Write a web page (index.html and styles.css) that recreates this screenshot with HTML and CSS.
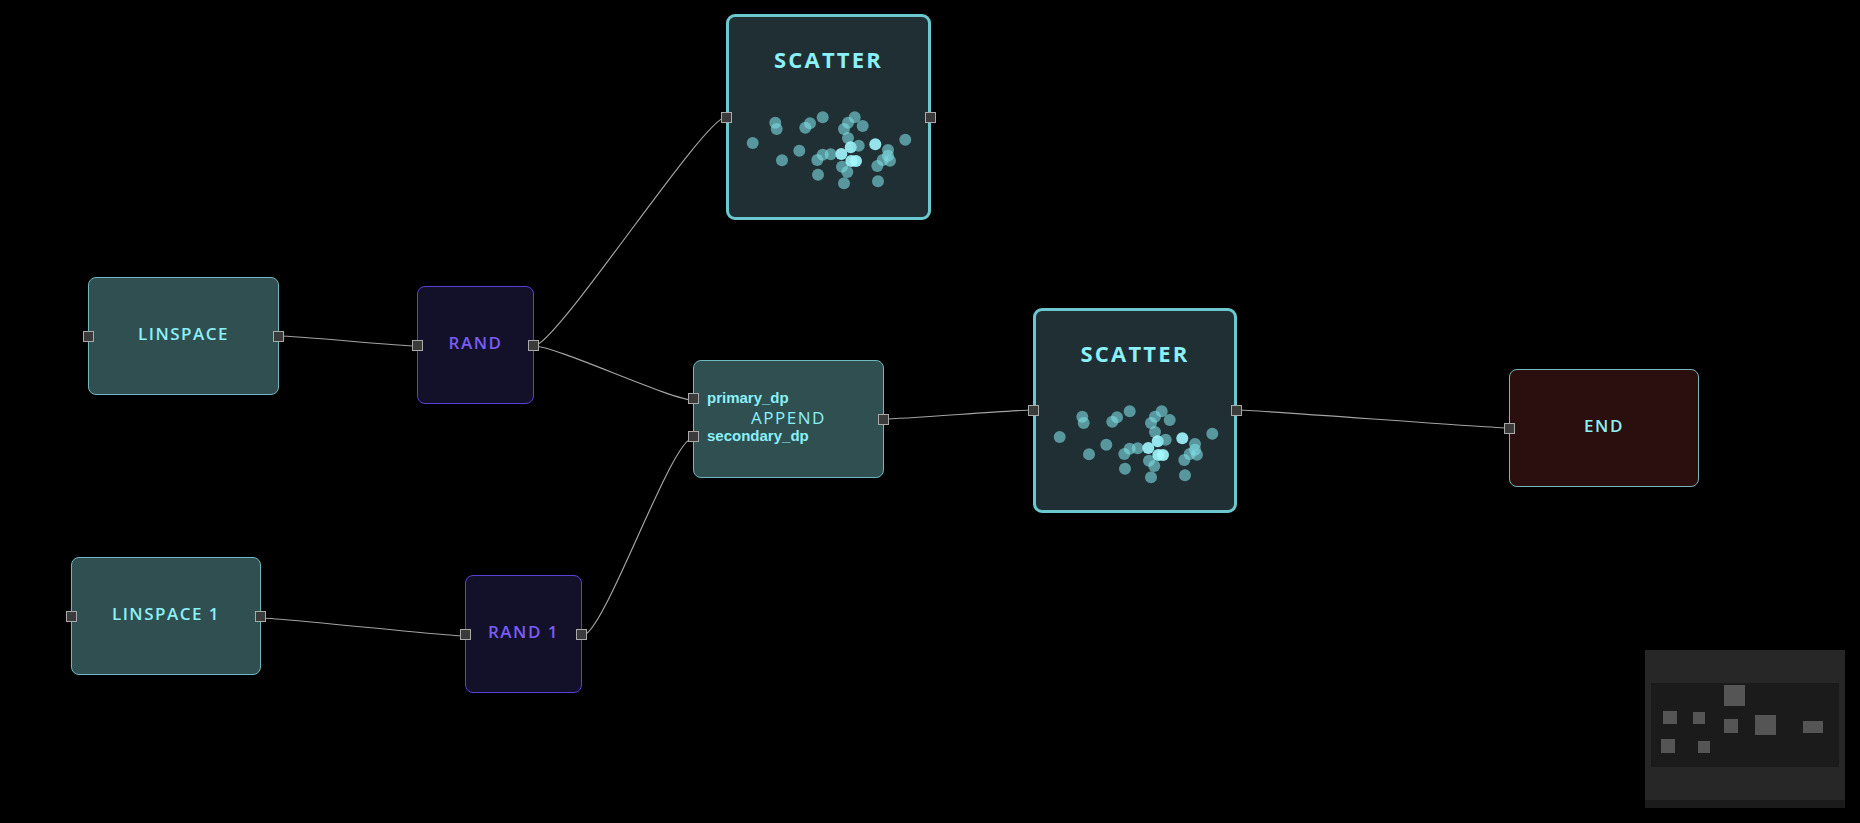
FILE: index.html
```html
<!DOCTYPE html>
<html lang="en">
<head>
  <meta charset="UTF-8" />
  <title>Flow Editor</title>
  <link rel="stylesheet" href="styles.css">
</head>
<body>
  <div class="canvas">
    <svg class="edges" width="1860" height="823" viewBox="0 0 1860 823">
      <path d="M 279 336 C 300 336, 396 346, 417 346" />
      <path d="M 534 346 C 556 346, 704 117, 726 117" />
      <path d="M 534 346 C 556 346, 671 400, 693 400" />
      <path d="M 261 618 C 282 618, 444 636, 465 636" />
      <path d="M 582 636 C 604 636, 671 438, 693 438" />
      <path d="M 884 419 C 905 419, 1012 410, 1033 410" />
      <path d="M 1237 410 C 1258 410, 1488 428, 1509 428" />
    </svg>

    <div class="node teal n-linspace">
      <span class="port in"></span>
      <span class="title">LINSPACE</span>
      <span class="port out"></span>
    </div>

    <div class="node purple n-rand">
      <span class="port in"></span>
      <span class="title">RAND</span>
      <span class="port out"></span>
    </div>

    <div class="node teal n-linspace1">
      <span class="port in"></span>
      <span class="title">LINSPACE 1</span>
      <span class="port out"></span>
    </div>

    <div class="node purple n-rand1">
      <span class="port in"></span>
      <span class="title">RAND 1</span>
      <span class="port out"></span>
    </div>

    <div class="node teal n-append">
      <div class="port-row primary"><span class="port"></span><span class="port-label">primary_dp</span></div>
      <div class="port-row secondary"><span class="port"></span><span class="port-label">secondary_dp</span></div>
      <span class="title light">APPEND</span>
      <span class="port out"></span>
    </div>

    <div class="node scatter n-scatter-a">
      <span class="port in"></span>
      <div class="scatter-title">SCATTER</div>
      <svg class="plot" width="199" height="140" viewBox="3 62 199 140">
        <g class="dots">
          <circle cx="26.7" cy="129" r="6" /><circle cx="49.3" cy="108.7" r="6" /><circle cx="50.7" cy="115" r="6" />
          <circle cx="56" cy="146.3" r="6" /><circle cx="73.3" cy="136.7" r="6" /><circle cx="79.3" cy="113.7" r="6" />
          <circle cx="84" cy="109.3" r="6" /><circle cx="96.7" cy="103.3" r="6" /><circle cx="92" cy="160.7" r="6" />
          <circle cx="91.3" cy="146" r="6" /><circle cx="96.7" cy="140.7" r="6" /><circle cx="104.7" cy="140.3" r="6" />
          <circle cx="115.3" cy="140" r="6" class="hot" /><circle cx="118" cy="169.3" r="6" /><circle cx="116" cy="152.7" r="6" />
          <circle cx="121.3" cy="158" r="6" /><circle cx="118" cy="115" r="6" /><circle cx="122" cy="108.7" r="6" />
          <circle cx="128.7" cy="103.3" r="6" /><circle cx="136.7" cy="112" r="6" /><circle cx="122" cy="124" r="6" />
          <circle cx="124.7" cy="133.3" r="6" class="hot" /><circle cx="132.7" cy="131.7" r="6" /><circle cx="125.3" cy="147" r="6" class="hot" />
          <circle cx="130" cy="147" r="6" class="hot" /><circle cx="149.3" cy="130.3" r="6" class="hot" /><circle cx="152" cy="167.3" r="6" />
          <circle cx="151.3" cy="152" r="6" /><circle cx="156.7" cy="146" r="6" /><circle cx="162" cy="136" r="6" />
          <circle cx="164" cy="146.7" r="6" /><circle cx="162" cy="141.7" r="6" /><circle cx="179.3" cy="125.7" r="6" />
        </g>
      </svg>
      <span class="port out"></span>
    </div>

    <div class="node scatter n-scatter-b">
      <span class="port in"></span>
      <div class="scatter-title">SCATTER</div>
      <svg class="plot" width="198" height="140" viewBox="3 62 198 140">
        <g class="dots">
          <circle cx="26.7" cy="129" r="6" /><circle cx="49.3" cy="108.7" r="6" /><circle cx="50.7" cy="115" r="6" />
          <circle cx="56" cy="146.3" r="6" /><circle cx="73.3" cy="136.7" r="6" /><circle cx="79.3" cy="113.7" r="6" />
          <circle cx="84" cy="109.3" r="6" /><circle cx="96.7" cy="103.3" r="6" /><circle cx="92" cy="160.7" r="6" />
          <circle cx="91.3" cy="146" r="6" /><circle cx="96.7" cy="140.7" r="6" /><circle cx="104.7" cy="140.3" r="6" />
          <circle cx="115.3" cy="140" r="6" class="hot" /><circle cx="118" cy="169.3" r="6" /><circle cx="116" cy="152.7" r="6" />
          <circle cx="121.3" cy="158" r="6" /><circle cx="118" cy="115" r="6" /><circle cx="122" cy="108.7" r="6" />
          <circle cx="128.7" cy="103.3" r="6" /><circle cx="136.7" cy="112" r="6" /><circle cx="122" cy="124" r="6" />
          <circle cx="124.7" cy="133.3" r="6" class="hot" /><circle cx="132.7" cy="131.7" r="6" /><circle cx="125.3" cy="147" r="6" class="hot" />
          <circle cx="130" cy="147" r="6" class="hot" /><circle cx="149.3" cy="130.3" r="6" class="hot" /><circle cx="152" cy="167.3" r="6" />
          <circle cx="151.3" cy="152" r="6" /><circle cx="156.7" cy="146" r="6" /><circle cx="162" cy="136" r="6" />
          <circle cx="164" cy="146.7" r="6" /><circle cx="162" cy="141.7" r="6" /><circle cx="179.3" cy="125.7" r="6" />
        </g>
      </svg>
      <span class="port out"></span>
    </div>

    <div class="node end n-end">
      <span class="port in"></span>
      <span class="title">END</span>
    </div>

    <div class="minimap">
      <div class="minimap-view"></div>
      <span class="mini m-scatter-a"></span>
      <span class="mini m-linspace"></span>
      <span class="mini m-rand"></span>
      <span class="mini m-append"></span>
      <span class="mini m-scatter-b"></span>
      <span class="mini m-end"></span>
      <span class="mini m-linspace1"></span>
      <span class="mini m-rand1"></span>
      <div class="minimap-foot"></div>
    </div>
  </div>
</body>
</html>
```

FILE: styles.css
```css
* {
  box-sizing: border-box;
}

body {
  margin: 0;
  background: #000;
  font-family: 'Open Sans', 'Noto Sans', sans-serif;
  overflow: hidden;
}

.canvas {
  position: relative;
  width: 1860px;
  height: 823px;
  background: #000;
}

/* wires between nodes */
.edges {
  position: absolute;
  top: 0;
  left: 0;
}

.edges path {
  fill: none;
  stroke: #a3a3a3;
  stroke-width: 1.2;
}

/* nodes */
.node {
  position: absolute;
  display: flex;
  align-items: center;
  justify-content: center;
  border-radius: 8px;
  border: 1px solid #6fb9be;
}

.node .title {
  font-size: 17px;
  font-weight: 600;
  letter-spacing: 1.5px;
  color: #8cf0f8;
  margin-top: -6px;
}

.node .title.light {
  font-weight: 400;
  margin-top: -4px;
}

.teal {
  background: #2f4f51;
  width: 191px;
  height: 118px;
}

.purple {
  background: #13102a;
  border-color: #5b40d4;
  width: 117px;
  height: 118px;
}

.purple .title {
  color: #7a5cf6;
}

.end {
  background: #2b0e0e;
  border-color: #76b6bd;
  width: 190px;
  height: 118px;
}

.scatter {
  background: #1f2f33;
  border: 3px solid #6cc8cf;
  border-radius: 9px;
  width: 205px;
  height: 206px;
  flex-direction: column;
  justify-content: flex-start;
}

.scatter-title {
  padding-top: 27px;
  height: 59px;
  line-height: 30px;
  font-size: 22px;
  font-weight: 700;
  letter-spacing: 2.2px;
  color: #8cf0f8;
}

.plot {
  display: block;
  align-self: flex-start;
}

.dots circle {
  fill: #7fdde4;
  opacity: 0.6;
}

.dots circle.hot {
  fill: #a2f8ff;
  opacity: 0.9;
}

/* ports */
.port {
  width: 11px;
  height: 11px;
  background: #3b3b3b;
  border: 1px solid #a9a9a9;
}

.node > .port {
  position: absolute;
  top: 50%;
  margin-top: -5.5px;
}

.node > .port.in {
  left: -6px;
}

.node > .port.out {
  right: -6px;
}

.scatter > .port.in {
  left: -8px;
}

.scatter > .port.out {
  right: -8px;
}

.port-row {
  position: absolute;
  left: -6px;
  display: flex;
  align-items: center;
  gap: 8px;
}

.port-row.primary {
  top: 32px;
}

.port-row.secondary {
  top: 70px;
}

.port-label {
  font-family: 'Liberation Sans', Arial, sans-serif;
  font-weight: 700;
  font-size: 15px;
  color: #8cf0f8;
  line-height: 13px;
  margin-top: -2px;
}

/* node placement on the canvas */
.n-linspace { left: 88px; top: 277px; }
.n-rand { left: 417px; top: 286px; }
.n-linspace1 { left: 71px; top: 557px; width: 190px; }
.n-rand1 { left: 465px; top: 575px; }
.n-append { left: 693px; top: 360px; }
.n-scatter-a { left: 726px; top: 14px; }
.n-scatter-b { left: 1033px; top: 308px; width: 204px; height: 205px; }
.n-end { left: 1509px; top: 369px; }

/* minimap */
.minimap {
  position: absolute;
  left: 1645px;
  top: 650px;
  width: 200px;
  height: 158px;
  background: #272727;
}

.minimap-view {
  position: absolute;
  left: 6px;
  top: 33px;
  width: 188px;
  height: 84px;
  background: #1b1b1b;
}

.minimap-foot {
  position: absolute;
  left: 0;
  bottom: 0;
  width: 100%;
  height: 8px;
  background: #1b1b1b;
}

.mini {
  position: absolute;
  background: #555;
}

.m-scatter-a { left: 79px; top: 35px; width: 21px; height: 21px; }
.m-linspace { left: 18px; top: 61px; width: 14px; height: 13px; }
.m-rand { left: 48px; top: 62px; width: 12px; height: 12px; }
.m-append { left: 79px; top: 69px; width: 14px; height: 14px; }
.m-scatter-b { left: 110px; top: 65px; width: 21px; height: 20px; }
.m-end { left: 158px; top: 71px; width: 20px; height: 12px; }
.m-linspace1 { left: 16px; top: 89px; width: 14px; height: 14px; }
.m-rand1 { left: 53px; top: 91px; width: 12px; height: 12px; }
```
